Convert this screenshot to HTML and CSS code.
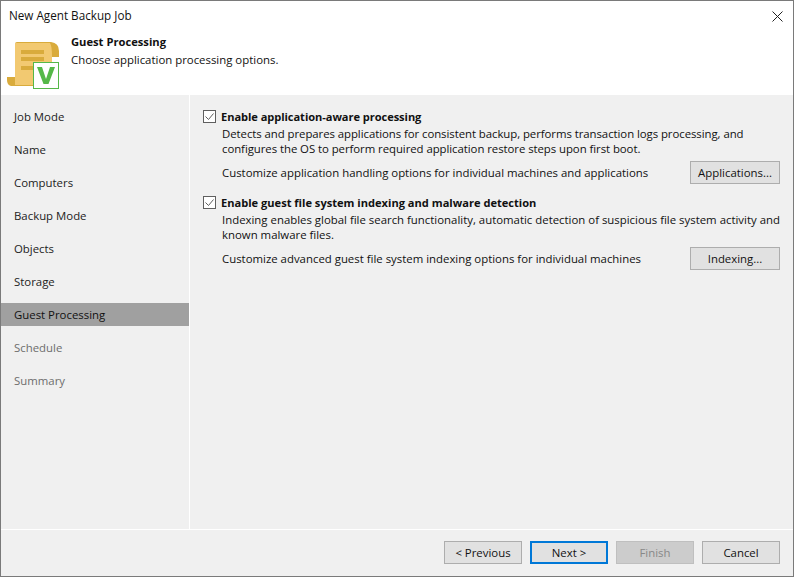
FILE: index.html
```html
<!DOCTYPE html>
<html lang="en">
<head>
<meta charset="utf-8">
<title>New Agent Backup Job</title>
<link rel="stylesheet" href="styles.css">
</head>
<body>
<div class="window">
  <div class="titlebar">
    <span class="title">New Agent Backup Job</span>
    <svg class="close" width="11" height="11" viewBox="0 0 11 11"><path d="M.5.5l10 10M10.500.5l-10 10" stroke="#222" fill="none"/></svg>
  </div>
  <header class="header">
    <svg class="logo" width="54" height="48" viewBox="0 0 54 48">
      <path d="M0 35h8V2q0-2 2-2h34q8 1 8 9v6h-7v20H26v9H4q-4-1-4-6z" fill="#d9ab3c"/>
      <path d="M8 1h35q2 3 2 14v20H26v8H8z" fill="#f2c971"/>
      <path d="M14 8h23v4H14zM14 15h23v4H14zM14 24h23v4H14z" fill="#d9ab3c"/>
      <rect x="26.500" y="20.500" width="25" height="26" fill="#fff" stroke="#55b848"/>
      <path d="M30 25h5l4 12 4-12h5l-6.500 17h-5z" fill="#55b848"/>
    </svg>
    <div class="heading">
      <div class="heading-title">Guest Processing</div>
      <div class="heading-sub">Choose application processing options.</div>
    </div>
  </header>
  <div class="middle">
    <nav class="sidebar">
      <div class="step">Job Mode</div>
      <div class="step">Name</div>
      <div class="step">Computers</div>
      <div class="step">Backup Mode</div>
      <div class="step">Objects</div>
      <div class="step">Storage</div>
      <div class="step current">Guest Processing</div>
      <div class="step muted">Schedule</div>
      <div class="step muted">Summary</div>
    </nav>
    <main class="content">
      <section class="option">
        <div class="check-row">
          <svg class="check" width="13" height="13" viewBox="0 0 13 13"><rect x=".5" y=".5" width="12" height="12" fill="#fff" stroke="#5f5f5f"/><path d="M2.500 6.500l3 3 5-6" fill="none" stroke="#5f5f5f"/></svg>
          <span class="check-label tight">Enable application-aware processing</span>
        </div>
        <p class="desc tight">Detects and prepares applications for consistent backup, performs transaction logs processing, and<br>configures the OS to perform required application restore steps upon first boot.</p>
        <div class="action">
          <span>Customize application handling options for individual machines and applications</span>
          <button class="btn" type="button">Applications...</button>
        </div>
      </section>
      <section class="option">
        <div class="check-row">
          <svg class="check" width="13" height="13" viewBox="0 0 13 13"><rect x=".5" y=".5" width="12" height="12" fill="#fff" stroke="#5f5f5f"/><path d="M2.500 6.500l3 3 5-6" fill="none" stroke="#5f5f5f"/></svg>
          <span class="check-label">Enable guest file system indexing and malware detection</span>
        </div>
        <p class="desc">Indexing enables global file search functionality, automatic detection of suspicious file system activity and<br>known malware files.</p>
        <div class="action">
          <span>Customize advanced guest file system indexing options for individual machines</span>
          <button class="btn" type="button">Indexing...</button>
        </div>
      </section>
    </main>
  </div>
  <footer class="footer">
    <button class="btn" type="button">&lt; Previous</button>
    <button class="btn primary" type="button">Next &gt;</button>
    <button class="btn disabled" type="button">Finish</button>
    <button class="btn" type="button">Cancel</button>
  </footer>
</div>
</body>
</html>
```
FILE: styles.css
```css
* { box-sizing: border-box; }
html, body { margin: 0; height: 100%; }
body { font: 11.4px/15px "Open Sans", "Noto Sans", sans-serif; color: #111; background: #fff; overflow: hidden; }
.window { height: 577px; border: 1px solid #7a7a7a; display: flex; flex-direction: column; background: #f0f0f0; }
.titlebar { height: 29px; padding: 7px 10px 0 8px; background: #fff; display: flex; justify-content: space-between; align-items: flex-start; flex: none; }
.title { font-size: 11.7px; }
.close { margin-top: 3px; }
.header { height: 65px; background: #fff; display: flex; padding-left: 6px; flex: none; }
.logo { margin-top: 12px; }
.heading { margin-left: 10px; padding-top: 4px; }
.heading-title { font-weight: 700; font-size: 11.2px; height: 18px; }
.middle { flex: 1; display: flex; min-height: 0; }
.sidebar { width: 188px; padding-top: 10px; flex: none; }
.step { height: 23px; margin-bottom: 10px; padding: 4px 0 0 13px; color: #222; }
.step.current { background: #a0a0a0; color: #111; }
.step.muted { color: #6d6d6d; }
.content { flex: 1; border-left: 1px solid #fff; padding: 13px 13px 0 13px; }
.option { margin-bottom: 10px; }
.check-row { display: flex; align-items: center; height: 16px; gap: 5px; }
.check-label { font-weight: 700; font-size: 11.1px; }
.desc { margin: 2px 0 0 19px; line-height: 15px; white-space: nowrap; }
.tight { letter-spacing: -0.06px; }
.action { margin: 5px 0 0 19px; display: flex; justify-content: space-between; align-items: center; height: 23px; }
.btn { width: 90px; height: 23px; padding: 0; font: inherit; color: #111; background: #e1e1e1; border: 1px solid #adadad; }
.footer { height: 47px; flex: none; border-top: 1px solid #fff; display: flex; justify-content: flex-end; gap: 8px; padding: 11px 13px 0 0; }
.footer .btn { width: 78px; }
.btn.primary { border: 2px solid #0078d7; }
.btn.disabled { background: #cccccc; color: #888; border-color: #bfbfbf; }
```
